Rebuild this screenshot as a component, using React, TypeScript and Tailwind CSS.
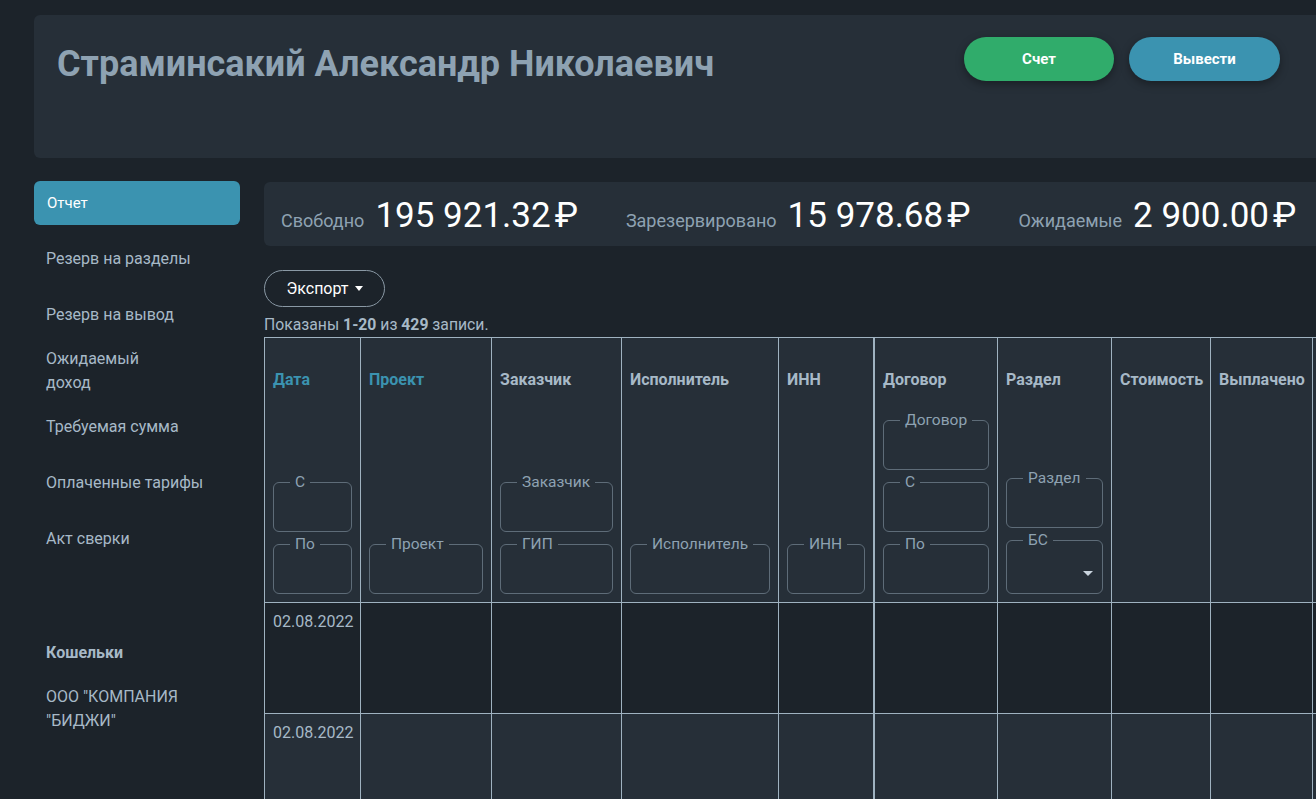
import React from "react";

const NAV = [
  "Резерв на разделы",
  "Резерв на вывод",
  "Ожидаемый\nдоход",
  "Требуемая сумма",
  "Оплаченные тарифы",
  "Акт сверки",
];

const STATS = [
  { label: "Свободно", value: "195 921.32" },
  { label: "Зарезервировано", value: "15 978.68" },
  { label: "Ожидаемые", value: "2 900.00" },
];

type Col = {
  title: string;
  w: string;
  link?: boolean;
  filters?: { label: string; h?: string; select?: boolean }[];
  thick?: boolean;
};

const COLS: Col[] = [
  { title: "Дата", w: "w-[96px]", link: true, filters: [{ label: "С" }, { label: "По" }] },
  { title: "Проект", w: "w-[131px]", link: true, filters: [{ label: "Проект" }] },
  { title: "Заказчик", w: "w-[130px]", filters: [{ label: "Заказчик" }, { label: "ГИП" }] },
  { title: "Исполнитель", w: "w-[157px]", filters: [{ label: "Исполнитель" }] },
  { title: "ИНН", w: "w-[96px]", filters: [{ label: "ИНН" }], thick: true },
  { title: "Договор", w: "w-[123px]", filters: [{ label: "Договор" }, { label: "С" }, { label: "По" }] },
  { title: "Раздел", w: "w-[114px]", filters: [{ label: "Раздел" }, { label: "БС", h: "h-[63px]", select: true }] },
  { title: "Стоимость", w: "w-[99px]" },
  { title: "Выплачено", w: "w-[102px]" },
  { title: "", w: "w-[110px]" },
];

function Filter({ label, h = "h-[59px]", select }: { label: string; h?: string; select?: boolean }) {
  return (
    <fieldset className={`w-full ${h} rounded-[6px] border border-[#5e6c78] pl-[12px]`}>
      <legend className="ml-[4px] px-[5px] text-[15.5px] leading-[18px] text-[#8ea2b2]">{label}</legend>
      {select && (
        <div className="flex h-[43px] items-end justify-end pb-[16px] pr-[9px]">
          <span className="h-0 w-0 border-x-[5px] border-t-[5px] border-x-transparent border-t-[#c9d4dd]" />
        </div>
      )}
    </fieldset>
  );
}

export default function App() {
  return (
    <div className="min-h-screen w-full overflow-hidden bg-[#1c232a] font-['Roboto','Liberation_Sans',sans-serif]">
      <div className="w-[1600px] pl-[34px] pt-[15px]">
        {/* top card */}
        <div className="flex h-[143px] w-[1306px] rounded-md bg-[#262f38] pl-[23px] pr-[60px]">
          <h1 className="flex-1 pt-[28px] text-[36px] font-bold leading-[43px] text-[#8ea2b2]">
            Страминсакий Александр Николаевич
          </h1>
          <div className="flex gap-[15px] pt-[22px]">
            <button className="h-[44px] w-[150px] rounded-full bg-[#30ac6b] text-[15px] font-bold text-white shadow-[0_3px_8px_rgba(0,0,0,0.35)]">
              Счет
            </button>
            <button className="h-[44px] w-[151px] rounded-full bg-[#3b93b0] text-[15px] font-bold text-white shadow-[0_3px_8px_rgba(0,0,0,0.35)]">
              Вывести
            </button>
          </div>
        </div>

        <div className="mt-[23px] flex gap-[24px]">
          {/* sidebar */}
          <nav className="flex w-[206px] shrink-0 flex-col gap-3 text-[16px] leading-[24px] text-[#a7b9c7]">
            <div className="flex h-11 items-center rounded-md bg-[#3b93b0] pl-[13px] text-[15px] text-white">
              Отчет
            </div>
            {NAV.map((n) => (
              <div key={n} className="flex h-11 items-center whitespace-pre-line pl-[12px]">
                {n}
              </div>
            ))}
            <div className="h-[46px]" />
            <div className="flex h-11 items-center pl-[12px] font-bold">Кошельки</div>
            <div className="flex h-11 items-center pl-[12px]">
              ООО "КОМПАНИЯ
              <br />
              "БИДЖИ"
            </div>
          </nav>

          {/* content */}
          <main className="flex-1">
            <div className="mt-px flex h-16 w-[1076px] items-center gap-[48px] rounded-md bg-[#262f38] pl-[17px] pt-[3px]">
              {STATS.map((s) => (
                <div key={s.label} className="flex items-baseline gap-[11px]">
                  <span className="text-[18px] text-[#8ea2b2]">{s.label}</span>
                  <span className="text-[35px] leading-none text-white">
                    {s.value}
                    <span className="ml-[4px]">₽</span>
                  </span>
                </div>
              ))}
            </div>

            <button className="mt-[24px] flex h-[37px] w-[121px] items-center justify-center rounded-full border border-[#8a99a5] text-[16px] text-white">
              Экспорт
              <span className="ml-[6px] h-0 w-0 border-x-[4px] border-t-[5px] border-x-transparent border-t-white" />
            </button>

            <p className="mt-[8px] text-[15.75px] leading-[20px] text-[#a7b9c7]">
              Показаны <b>1-20</b> из <b>429</b> записи.
            </p>

            {/* table */}
            <div className="mt-[2px] inline-block border-l border-t border-[#9fb2c0]">
              <div className="flex bg-[#262f38]">
                {COLS.map((c, i) => (
                  <div
                    key={i}
                    className={`${c.w} flex h-[265px] shrink-0 flex-col border-b border-[#9fb2c0] px-[8px] pb-[8px] pt-[32px] ${
                      c.thick ? "border-r-2" : "border-r"
                    }`}
                  >
                    <span
                      className={`text-[16px] font-bold leading-[20px] ${
                        c.link ? "text-[#3b93b0]" : "text-[#a7b9c7]"
                      }`}
                    >
                      {c.title}
                    </span>
                    <div className="flex-1" />
                    <div className="flex flex-col gap-[3px]">
                      {c.filters?.map((f, j) => (
                        <Filter key={j} label={f.label} h={f.h} select={f.select} />
                      ))}
                    </div>
                  </div>
                ))}
              </div>
              {["bg-[#1c232a]", "bg-[#262f38]"].map((bg, r) => (
                <div key={r} className={`flex ${bg}`}>
                  {COLS.map((c, i) => (
                    <div
                      key={i}
                      className={`${c.w} h-[111px] shrink-0 border-b border-[#9fb2c0] px-[8px] pt-[9px] text-[16px] leading-[20px] text-[#a7b9c7] ${
                        c.thick ? "border-r-2" : "border-r"
                      }`}
                    >
                      {i === 0 ? "02.08.2022" : ""}
                    </div>
                  ))}
                </div>
              ))}
            </div>
          </main>
        </div>
      </div>
    </div>
  );
}
